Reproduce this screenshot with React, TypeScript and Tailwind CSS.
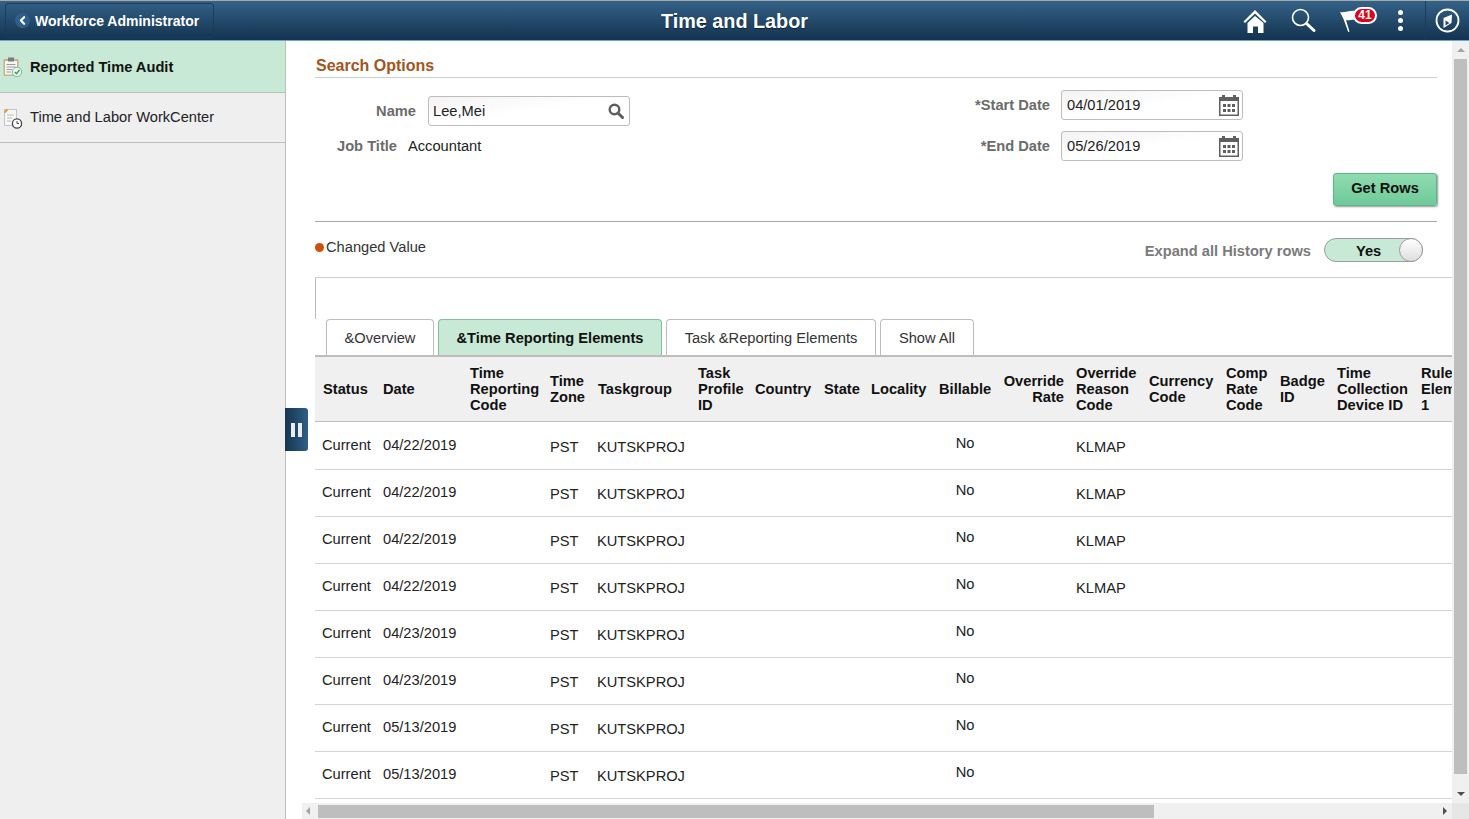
import { ChevronLeft } from "lucide-react";

const font = { fontFamily: '"Liberation Sans", Arial, sans-serif' };

// column template shared by the head row and the body rows
const cols =
  "grid grid-cols-[61px_87px_80px_48px_100px_57px_69px_47px_68px_66px_71px_73px_77px_54px_57px_84px_38px]";

const headers = [
  ["Status"],
  ["Date"],
  ["Time", "Reporting", "Code"],
  ["Time", "Zone"],
  ["Taskgroup"],
  ["Task", "Profile", "ID"],
  ["Country"],
  ["State"],
  ["Locality"],
  ["Billable"],
  ["Override", "Rate"],
  ["Override", "Reason", "Code"],
  ["Currency", "Code"],
  ["Comp", "Rate", "Code"],
  ["Badge", "ID"],
  ["Time", "Collection", "Device ID"],
  ["Rule", "Elem", "1"],
];

const rows = [
  { date: "04/22/2019", reason: "KLMAP" },
  { date: "04/22/2019", reason: "KLMAP" },
  { date: "04/22/2019", reason: "KLMAP" },
  { date: "04/22/2019", reason: "KLMAP" },
  { date: "04/23/2019", reason: "" },
  { date: "04/23/2019", reason: "" },
  { date: "05/13/2019", reason: "" },
  { date: "05/13/2019", reason: "" },
];

const CalendarIcon = () => (
  <svg width="20" height="21" viewBox="0 0 20 21" className="shrink-0">
    <rect x="0.75" y="2.75" width="18.5" height="17.5" fill="#fff" stroke="#5f5f5f" strokeWidth="1.5" />
    <rect x="0" y="2" width="20" height="4" fill="#5f5f5f" />
    <rect x="3" y="0" width="3" height="4" fill="#5f5f5f" />
    <rect x="14" y="0" width="3" height="4" fill="#5f5f5f" />
    {[4, 8.5, 13].map((x) =>
      [9, 14].map((y) => <rect key={`${x}-${y}`} x={x} y={y} width="3" height="3" fill="#5f5f5f" />)
    )}
  </svg>
);

const DateField = ({ label, value }: { label: string; value: string }) => (
  <div className="flex items-center justify-end pr-[194px]">
    <span className="font-bold text-[#6b6b6b] mr-[11px]">{label}</span>
    <div className="w-[182px] h-[30px] rounded-[3px] border border-[#bdbdbd] flex items-center justify-between pl-[5px] pr-[3px] bg-gradient-to-br from-[#f3f3f3] via-white to-white text-[#222]">
      <span>{value}</span>
      <CalendarIcon />
    </div>
  </div>
);

const Tab = ({ label, active, width }: { label: string; active?: boolean; width: string }) => (
  <div
    className={`${width} h-[36px] rounded-t-[4px] border border-b-0 flex items-center justify-center ${
      active ? "bg-[#c8e9d6] border-[#7cc29c] font-bold text-[#111]" : "bg-white border-[#bdbdbd] text-[#333]"
    }`}
  >
    {label}
  </div>
);

export default function App() {
  return (
    <div style={font} className="w-[1469px] h-[819px] overflow-hidden flex flex-col bg-white text-[14.67px] leading-5 text-[#222]">
      {/* top banner */}
      <header className="h-[41px] shrink-0 flex items-center border-t border-[#a9a9a9] border-b-[#6aa6cf] border-b bg-gradient-to-b from-[#346288] to-[#14334f] relative">
        <div className="ml-[5px] w-[209px] h-[35px] rounded-[3px] border border-[#1a3d5b] flex items-center pl-[9px] gap-[5px] text-white font-bold text-[14px]">
          <span className="w-[15px] h-[15px] rounded-full bg-[#2f5f88] flex items-center justify-center">
            <ChevronLeft size={13} strokeWidth={4} className="text-white" />
          </span>
          Workforce Administrator
        </div>
        <div className="flex-1 text-center text-white font-bold text-[19.8px] pl-[12px] [text-shadow:0_1px_1px_#0b2236]">
          Time and Labor
        </div>
        <div className="flex items-center h-full">
          <svg width="24" height="24" viewBox="0 0 24 24" className="mr-[24px]">
            <path d="M12 1 L0.5 12.5 L2 14 L12 4.4 L22 14 L23.5 12.5 Z" fill="#fff" />
            <path d="M12 7 L4.5 14 V24 H10 V17.5 H15 V24 H20.5 V14 Z" fill="#fff" />
          </svg>
          <svg width="25" height="25" viewBox="0 0 25 25" className="mr-[24px]">
            <circle cx="9.5" cy="9.5" r="8" fill="none" stroke="#fff" strokeWidth="1.6" />
            <path d="M15.5 15.5 L23 22.5" stroke="#fff" strokeWidth="3" strokeLinecap="round" />
          </svg>
          <div className="relative w-[38px] h-[26px] mr-[20px]">
            <svg width="22" height="24" viewBox="0 0 22 24" className="absolute left-0 top-[2px]">
              <path d="M0 2 C5 3 9 0 16 1 L17 10 C12 9 9 11 6 10 L9.5 21.5 L8.2 22 L3.5 9 Z" fill="#fff" />
            </svg>
            <span className="absolute left-[13px] -top-px w-[24px] h-[17px] rounded-full bg-[#e0001b] border-2 border-white text-white font-bold text-[12px] leading-[13px] text-center">
              41
            </span>
          </div>
          <div className="flex flex-col gap-[3px] mr-[22px]">
            <span className="w-[5px] h-[5px] rounded-full bg-white" />
            <span className="w-[5px] h-[5px] rounded-full bg-white" />
            <span className="w-[5px] h-[5px] rounded-full bg-white" />
          </div>
          <div className="w-[44px] h-full border-l border-[#1a3d5b] flex items-center justify-center">
            <svg width="25" height="25" viewBox="0 0 25 25">
              <circle cx="12.5" cy="12.5" r="11" fill="none" stroke="#fff" strokeWidth="1.8" />
              <path d="M17 6.5 L16.5 15 L8.5 20 L8.5 10 Z" fill="#fff" />
              <path d="M10.5 12.5 L14.5 15 L10.5 17.5 Z" fill="#24496a" />
            </svg>
          </div>
        </div>
      </header>

      <div className="flex-1 flex min-h-0">
        {/* left nav */}
        <aside className="w-[286px] shrink-0 bg-[#efefef] border-r border-[#bdbdbd]">
          <div className="h-[52px] bg-[#c8e9d6] border-b border-[#bdbdbd] flex items-center pl-[3px] font-bold text-[#111]">
            <svg width="20" height="20" viewBox="0 0 20 20" className="mr-[7px]">
              <rect x="0.5" y="2" width="15" height="17" rx="1" fill="#cdb084" />
              <rect x="2" y="4" width="12" height="13.5" fill="#f6f6f6" />
              <rect x="5" y="0.5" width="6" height="4" fill="#7d7d7d" />
              <path d="M3.5 7.5 H12.5 M3.5 10 H12.5 M3.5 12.5 H9 M3.5 15 H8" stroke="#9a9a9a" />
              <circle cx="14" cy="15" r="4.7" fill="#eef8f2" stroke="#6cbd8f" />
              <path d="M11.8 15 L13.5 16.8 L16.5 13" fill="none" stroke="#3f9a68" strokeWidth="1.4" />
            </svg>
            Reported Time Audit
          </div>
          <div className="h-[50px] border-b border-[#bdbdbd] flex items-center pl-[4px] pb-[2px] text-[#222]">
            <svg width="20" height="20" viewBox="0 0 20 20" className="mr-[6px] mt-[4px]">
              <rect x="0.5" y="0.5" width="12" height="16" fill="#f6f6f6" stroke="#c4c4c4" />
              <path d="M0.5 3.5 L3.5 0.5" stroke="#e69a2e" strokeWidth="2" />
              <path d="M3 6 H10 M3 9 H8 M3 12 H7" stroke="#bcbcbc" />
              <circle cx="13" cy="14.5" r="4.6" fill="#fff" stroke="#444" strokeWidth="1.3" />
              <path d="M13 12 V14.5 H15" fill="none" stroke="#444" />
            </svg>
            Time and Labor WorkCenter
          </div>
        </aside>

        {/* collapse handle lies over the edge of the nav */}
        <div className="absolute left-[285px] top-[408px] w-[23px] h-[43px] rounded-r-[3px] bg-gradient-to-r from-[#16364f] to-[#2f5f88] flex items-center justify-center gap-[3px] z-10">
          <span className="w-[4px] h-[14px] bg-[#e8eef3]" />
          <span className="w-[4px] h-[14px] bg-[#e8eef3]" />
        </div>

        {/* main column */}
        <div className="flex-1 min-w-0 flex flex-col">
          <div className="flex-1 min-h-0 flex">
            <main className="flex-1 min-w-0 overflow-hidden pl-[29px]">
              <div className="pr-[15px]">
                <div className="h-[37px] border-b border-[#cfcfcf] flex items-end pb-[1px] pl-px text-[16px] font-bold text-[#a5541c]">
                  Search Options
                </div>
                <div className="h-[144px] border-b border-[#a8a8a8] flex justify-between">
                  <div className="pt-[18px]">
                    <div className="flex items-center">
                      <span className="w-[101px] text-right font-bold text-[#6b6b6b] mr-[12px]">Name</span>
                      <div className="w-[202px] h-[30px] rounded-[3px] border border-[#bdbdbd] flex items-center justify-between pl-[4px] pr-[5px] bg-gradient-to-br from-[#f3f3f3] via-white to-white">
                        <span>Lee,Mei</span>
                        <svg width="16" height="16" viewBox="0 0 16 16">
                          <circle cx="6.5" cy="6.5" r="4.8" fill="none" stroke="#5f5f5f" strokeWidth="2.4" />
                          <path d="M10 10 L14.5 14.5" stroke="#5f5f5f" strokeWidth="3" strokeLinecap="round" />
                        </svg>
                      </div>
                    </div>
                    <div className="flex items-center mt-[10px]">
                      <span className="w-[82px] text-right font-bold text-[#6b6b6b] mr-[11px]">Job Title</span>
                      <span>Accountant</span>
                    </div>
                  </div>
                  <div className="w-[600px] pt-[12px] flex flex-col">
                    <DateField label="*Start Date" value="04/01/2019" />
                    <div className="h-[11px]" />
                    <DateField label="*End Date" value="05/26/2019" />
                    <button className="self-end mt-[12px] w-[104px] h-[33px] pb-[3px] rounded-[3px] border border-[#5fb388] bg-gradient-to-b from-[#8fdcb0] to-[#6fc998] shadow-[1px_1px_2px_#999] font-bold text-[#111]">
                      Get Rows
                    </button>
                  </div>
                </div>
                <div className="h-[55px] flex justify-between">
                  <div className="flex items-center h-[50px] text-[#333]">
                    <span className="w-[9px] h-[9px] rounded-full bg-[#d14e0a] mr-[2px]" />
                    Changed Value
                  </div>
                  <div className="flex items-center pt-[15px] pr-[14px] h-[40px]">
                    <span className="font-bold text-[#7a7a7a] mr-[13px] pt-[2px]">Expand all History rows</span>
                    <div className="w-[99px] h-[24px] rounded-full border border-[#9c9c9c] bg-[#c8e9d6] flex items-center justify-between pl-[31px] font-bold text-[#111]">
                      <span className="pt-[2px]">Yes</span>
                      <span className="w-[24px] h-[24px] rounded-full border border-[#9c9c9c] bg-gradient-to-b from-white to-[#dedede] -mr-px" />
                    </div>
                  </div>
                </div>
              </div>

              <div className="border-t border-[#cfcfcf]">
                <div className="h-[41px] border-l border-[#bdbdbd]" />
                <div className="flex gap-[4px] pl-[11px]">
                  <Tab label="&Overview" width="w-[108px]" />
                  <Tab label="&Time Reporting Elements" width="w-[224px]" active />
                  <Tab label="Task &Reporting Elements" width="w-[210px]" />
                  <Tab label="Show All" width="w-[94px]" />
                </div>

                <div className="w-[1137px] overflow-hidden">
                  <div className={`${cols} h-[67px] pb-px border-t-2 border-b border-[#bdbdbd] bg-[#f0f0f0] font-bold text-[#111] leading-4`}>
                    {headers.map((lines, i) => (
                      <div
                        key={i}
                        className={`flex flex-col justify-center whitespace-nowrap overflow-hidden ${
                          i === 0 ? "pl-[8px]" : "pl-[7px]"
                        } ${i === 10 ? "items-end pr-[5px]" : ""}`}
                      >
                        {lines.map((line) => (
                          <span key={line}>{line}</span>
                        ))}
                      </div>
                    ))}
                  </div>
                  {rows.map((row, i) => (
                    <div
                      key={i}
                      className={`${cols} border-b border-[#d4d4d4] ${i === 0 ? "h-[48px] pt-px" : "h-[47px]"}`}
                    >
                      <div className="pl-[7px] pt-[12px]">Current</div>
                      <div className="pl-[7px] pt-[12px]">{row.date}</div>
                      <div />
                      <div className="pl-[7px] pt-[14px]">PST</div>
                      <div className="pl-[6px] pt-[14px]">KUTSKPROJ</div>
                      <div />
                      <div />
                      <div />
                      <div />
                      <div className="text-center pt-[10px]">No</div>
                      <div />
                      <div className="pl-[7px] pt-[14px]">{row.reason}</div>
                    </div>
                  ))}
                </div>
              </div>
            </main>

            {/* vertical scrollbar */}
            <div className="w-[17px] shrink-0 bg-[#f0f0f0] flex flex-col items-center">
              <div className="h-[18px] flex items-center justify-center">
                <span className="border-x-[4px] border-x-transparent border-b-[4px] border-b-[#a3a3a3]" />
              </div>
              <div className="w-[13px] h-[715px] bg-[#bebebe]" />
              <div className="flex-1 flex items-end pb-[7px]">
                <span className="border-x-[4px] border-x-transparent border-t-[4px] border-t-[#505050]" />
              </div>
            </div>
          </div>

          {/* horizontal scrollbar */}
          <div className="h-[16px] shrink-0 flex">
            <div className="w-[16px] shrink-0 bg-white" />
            <div className="flex-1 bg-[#f0f0f0] flex items-center pl-[4px]">
              <span className="border-y-[4px] border-y-transparent border-r-[4px] border-r-[#a3a3a3]" />
              <div className="ml-[8px] w-[836px] h-[13px] bg-[#bebebe]" />
              <div className="flex-1 flex justify-end pr-[5px]">
                <span className="border-y-[4px] border-y-transparent border-l-[4px] border-l-[#505050]" />
              </div>
            </div>
            <div className="w-[17px] shrink-0 bg-[#e6e6e6]" />
          </div>
        </div>
      </div>
    </div>
  );
}
